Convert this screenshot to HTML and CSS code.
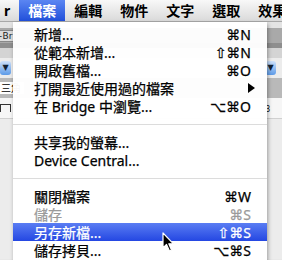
FILE: index.html
```
<!DOCTYPE html>
<html lang="zh-Hant">
<head>
    <meta charset="UTF-8">
    <title>檔案選單</title>
    <link rel="stylesheet" href="styles.css">
</head>
<body>
    <div class="menubar">
        <span class="bar-item app">r</span>
        <span class="bar-item active">檔案</span>
        <span class="bar-item">編輯</span>
        <span class="bar-item">物件</span>
        <span class="bar-item">文字</span>
        <span class="bar-item">選取</span>
        <span class="bar-item">效果</span>
    </div>

    <!-- 選單後面的工作區 -->
    <div class="workspace">
        <div class="strip top-gap"></div>
        <div class="strip toolbar">
            <span class="tool-btn">+Br</span>
        </div>
        <div class="strip dark-line"></div>
        <div class="strip light"></div>
        <div class="strip control">
            <span class="drop-btn">▼</span>
            <span class="drop-btn right">▼</span>
        </div>
        <div class="strip tabs">
            <span class="tab-label">三角</span>
        </div>
        <div class="strip ruler">
            <span class="ruler-mark"></span>
            <span class="ruler-num">3</span>
        </div>
        <div class="strip canvas"></div>
    </div>

    <div class="menu">
        <div class="item"><span>新增...</span><span class="key">⌘N</span></div>
        <div class="item"><span>從範本新增...</span><span class="key">⇧⌘N</span></div>
        <div class="item"><span>開啟舊檔...</span><span class="key">⌘O</span></div>
        <div class="item sub"><span>打開最近使用過的檔案</span><span class="arrow"></span></div>
        <div class="item"><span>在 Bridge 中瀏覽...</span><span class="key">⌥⌘O</span></div>
        <div class="sep"></div>
        <div class="item"><span>共享我的螢幕...</span></div>
        <div class="item"><span>Device Central...</span></div>
        <div class="sep"></div>
        <div class="item"><span>關閉檔案</span><span class="key">⌘W</span></div>
        <div class="item disabled"><span>儲存</span><span class="key">⌘S</span></div>
        <div class="item selected"><span>另存新檔...</span><span class="key">⇧⌘S</span></div>
        <div class="item"><span>儲存拷貝...</span><span class="key">⌥⌘S</span></div>
    </div>

    <svg class="cursor" width="14" height="21" viewBox="0 0 14 21">
        <path d="M1 1 L1 16 L4.5 12.5 L7.5 19 L9.5 18 L6.8 11.8 L11.5 11.8 Z" fill="#000" stroke="#fff" stroke-width="1.2" stroke-linejoin="round"/>
    </svg>
</body>
</html>
```

FILE: styles.css
```
body {
    margin: 0;
    width: 282px;
    height: 260px;
    overflow: hidden;
    position: relative;
    font-family: "Noto Sans", "Noto Sans CJK TC", sans-serif;
    background-color: #e8e8e8;
}
.menubar {
    display: flex;
    height: 22px;
    background: linear-gradient(#f8f8f8, #dadada);
    border-bottom: 1px solid #a8a8a8;
    box-sizing: border-box;
    font-size: 14px;
    font-weight: bold;
    line-height: 21px;
    color: #000;
}
.bar-item {
    padding: 0 9px;
    white-space: nowrap;
}
.bar-item.app {
    margin-left: -5px;
}
.bar-item.active {
    color: #fff;
    background: linear-gradient(#5b86f2, #2150da);
}
.workspace {
    display: flex;
    flex-direction: column;
}
.strip {
    display: flex;
    justify-content: space-between;
    align-items: center;
}
.top-gap {
    height: 6px;
    background-color: #e4e4e4;
}
.toolbar {
    height: 15px;
    background-color: #a9a9a9;
}
.tool-btn {
    font-family: "DejaVu Sans", sans-serif;
    font-size: 9px;
    color: #222;
    background-color: #dcdcdc;
    border: 1px solid #888;
    padding: 0 2px;
    margin-left: -8px;
}
.dark-line {
    height: 5px;
    background-color: #8e8e8e;
}
.light {
    height: 10px;
    background-color: #d4d4d4;
}
.control {
    height: 20px;
    background-color: #ececec;
}
.drop-btn {
    font-family: "DejaVu Sans", sans-serif;
    font-size: 8px;
    color: #123;
    width: 11px;
    height: 14px;
    line-height: 14px;
    text-align: center;
    border-radius: 3px;
    background: linear-gradient(#cfe2fb, #5d9be8);
}
.drop-btn.right {
    margin-right: 6px;
}
.tabs {
    height: 20px;
    background-color: #b9b9b9;
}
.tab-label {
    font-size: 10px;
    background-color: #fff;
    margin-left: -2px;
    padding: 0 3px;
    line-height: 12px;
}
.ruler {
    height: 20px;
    background-color: #f6f6f6;
    border-bottom: 1px solid #d0d0d0;
}
.ruler-mark {
    width: 9px;
    height: 7px;
    border: 1px solid #333;
    border-bottom: none;
}
.ruler-num {
    font-size: 8px;
    margin-right: 12px;
}
.canvas {
    height: 140px;
    background-color: #ececec;
}
.menu {
    position: absolute;
    left: 13px;
    top: 22px;
    width: 254px;
    height: 250px;
    padding-top: 3px;
    box-sizing: border-box;
    background-color: rgba(255, 255, 255, 0.97);
    box-shadow: 1px 2px 4px rgba(0, 0, 0, 0.35);
    font-size: 14px;
    color: #000;
    -webkit-text-stroke: 0.25px currentColor;
}
.item {
    display: flex;
    justify-content: space-between;
    align-items: center;
    height: 18px;
    padding: 0 16px 0 21px;
    white-space: nowrap;
}
.item.sub {
    padding-right: 12px;
}
.key {
    font-family: "Noto Sans", "DejaVu Sans", sans-serif;
}
.arrow {
    width: 0;
    height: 0;
    border-left: 7px solid #000;
    border-top: 5px solid transparent;
    border-bottom: 5px solid transparent;
}
.item.disabled {
    color: #9a9a9a;
}
.item.selected {
    color: #fff;
    background: linear-gradient(#5a7df3, #2447e2);
}
.sep {
    height: 18px;
    display: flex;
    align-items: center;
}
.sep::after {
    content: "";
    flex: 1;
    height: 1px;
    background-color: #dcdcdc;
}
.cursor {
    position: absolute;
    left: 162px;
    top: 232px;
}
```
